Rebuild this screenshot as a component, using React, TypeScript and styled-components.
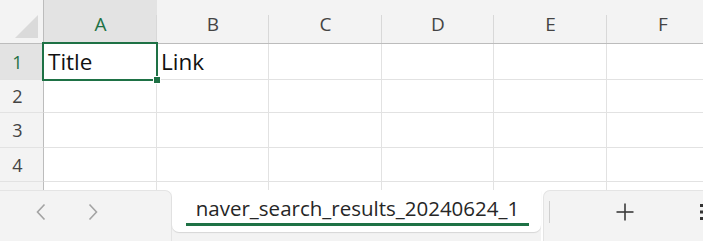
import React from "react";
import styled, { createGlobalStyle } from "styled-components";

const GlobalStyle = createGlobalStyle`
  html, body { margin: 0; padding: 0; background: #ffffff; }
  body { font-family: "Open Sans", "Noto Sans", sans-serif; overflow: hidden; }
  #root { width: 703px; height: 241px; }
`;

const GREEN = "#1e7145";
const GRID = "#e2e2e2";
const HEADER_BG = "#f3f3f3";
const HEADER_SEL = "#e3e3e3";
const BAR_BG = "#f3f3f3";

const Window = styled.div`
  width: 703px;
  height: 241px;
  display: flex;
  flex-direction: column;
  background: #ffffff;
`;

const Sheet = styled.div`
  height: 190px;
  overflow: hidden;
  display: grid;
  grid-template-columns: 44px 113px 112px 113px 112px 113px 112px;
  grid-template-rows: 44px 36px 33px 35px 34px 40px;
`;

const Corner = styled.div`
  background: ${HEADER_BG};
  border-right: 1px solid #bcbcbc;
  border-bottom: 1px solid #bcbcbc;
  display: flex;
  align-items: flex-end;
  justify-content: flex-end;
  padding: 0 5px 5px 0;
`;

const ColHeader = styled.div<{ $selected?: boolean }>`
  position: relative;
  background: ${(p) => (p.$selected ? HEADER_SEL : HEADER_BG)};
  border-bottom: 1px solid #bcbcbc;
  color: ${(p) => (p.$selected ? GREEN : "#444444")};
  font-size: 19px;
  display: flex;
  align-items: center;
  justify-content: center;
  padding-top: 5px;
  box-sizing: border-box;
  &::after {
    content: "";
    position: absolute;
    right: 0;
    top: 15px;
    bottom: 0;
    width: 1px;
    background: #d8d8d8;
  }
`;

const RowHeader = styled.div<{ $selected?: boolean }>`
  background: ${(p) => (p.$selected ? HEADER_SEL : HEADER_BG)};
  border-right: 1px solid #bcbcbc;
  border-bottom: 1px solid ${GRID};
  color: ${(p) => (p.$selected ? GREEN : "#444444")};
  font-size: 18px;
  display: flex;
  align-items: center;
  justify-content: center;
  padding-right: 8px;
  box-sizing: border-box;
`;

const Cell = styled.div<{ $active?: boolean }>`
  position: relative;
  border-right: 1px solid ${GRID};
  border-bottom: 1px solid ${GRID};
  font-size: 22.5px;
  color: #111111;
  display: flex;
  align-items: center;
  padding-left: 4px;
  box-sizing: border-box;
  white-space: nowrap;
  ${(p) =>
    p.$active &&
    `
    &::after {
      content: "";
      position: absolute;
      left: -2px;
      top: -2px;
      right: -2px;
      bottom: -2px;
      border: 2px solid ${GREEN};
      pointer-events: none;
      z-index: 1;
    }
  `}
`;

const FillHandle = styled.span`
  position: absolute;
  right: -5px;
  bottom: -5px;
  width: 6px;
  height: 6px;
  background: ${GREEN};
  border: 1px solid #ffffff;
  z-index: 2;
`;

const Bar = styled.div`
  flex: 1;
  display: flex;
  background: #ffffff;
`;

const LeftPanel = styled.div`
  width: 172px;
  background: ${BAR_BG};
  border-top-right-radius: 7px;
  border-top: 1px solid #e4e4e4;
  border-right: 1px solid #e4e4e4;
  box-sizing: border-box;
  display: flex;
  align-items: center;
  padding: 0 0 8px 33px;
  gap: 36px;
`;

const NavButton = styled.span`
  width: 16px;
  height: 20px;
  display: flex;
  align-items: center;
  justify-content: center;
`;

const TabColumn = styled.div`
  width: 369px;
  background: ${BAR_BG};
  display: flex;
  flex-direction: column;
`;

const Tab = styled.div`
  height: 42px;
  background: #ffffff;
  border-radius: 0 0 7px 7px;
  box-shadow: 0 1px 1px rgba(0, 0, 0, 0.12);
  padding: 0 12px 0 14px;
  display: flex;
  flex-direction: column;
  align-items: stretch;
`;

const TabLabel = styled.div`
  height: 36px;
  display: flex;
  align-items: flex-end;
  justify-content: center;
  font-size: 20.5px;
  color: #262626;
  border-bottom: 3px solid ${GREEN};
  line-height: 1;
  padding-bottom: 5px;
  box-sizing: border-box;
`;

const RightPanel = styled.div`
  flex: 1;
  margin-left: 2px;
  background: ${BAR_BG};
  border-top-left-radius: 7px;
  border-top: 1px solid #e4e4e4;
  border-left: 1px solid #e4e4e4;
  box-sizing: border-box;
  display: flex;
  align-items: center;
  padding-bottom: 8px;
`;

const Separator = styled.span`
  width: 1px;
  height: 22px;
  background: #cfcfcf;
  margin-left: 5px;
`;

const AddButton = styled.span`
  margin-left: 66px;
  width: 18px;
  height: 18px;
  display: flex;
`;

const MoreButton = styled.span`
  margin-left: auto;
  margin-right: -3px;
  width: 6px;
  display: flex;
`;

const cols = ["A", "B", "C", "D", "E", "F"];
const rows = [1, 2, 3, 4, 5];
const visibleRowLabels = 4;

const data: Record<string, string> = { A1: "Title", B1: "Link" };

export default function App() {
  return (
    <>
      <GlobalStyle />
      <Window>
        <Sheet>
          <Corner>
            <svg width="23" height="23" viewBox="0 0 23 23">
              <polygon points="23,0 23,23 0,23" fill="#dadada" />
            </svg>
          </Corner>
          {cols.map((c) => (
            <ColHeader key={c} $selected={c === "A"}>
              {c}
            </ColHeader>
          ))}
          {rows.map((r) => (
            <React.Fragment key={r}>
              <RowHeader $selected={r === 1}>{r <= visibleRowLabels ? r : ""}</RowHeader>
              {cols.map((c) => {
                const id = `${c}${r}`;
                const active = id === "A1";
                return (
                  <Cell key={id} $active={active}>
                    {data[id] ?? ""}
                    {active && <FillHandle />}
                  </Cell>
                );
              })}
            </React.Fragment>
          ))}
        </Sheet>
        <Bar>
          <LeftPanel>
            <NavButton>
              <svg width="10" height="18" viewBox="0 0 10 18">
                <polyline points="8.5,1.5 1.5,9 8.5,16.5" fill="none" stroke="#a3a3a3" strokeWidth="1.6" />
              </svg>
            </NavButton>
            <NavButton>
              <svg width="10" height="18" viewBox="0 0 10 18">
                <polyline points="1.5,1.5 8.5,9 1.5,16.5" fill="none" stroke="#a3a3a3" strokeWidth="1.6" />
              </svg>
            </NavButton>
          </LeftPanel>
          <TabColumn>
            <Tab>
              <TabLabel>naver_search_results_20240624_1</TabLabel>
            </Tab>
          </TabColumn>
          <RightPanel>
            <Separator />
            <AddButton>
              <svg width="18" height="18" viewBox="0 0 18 18">
                <line x1="9" y1="0.5" x2="9" y2="17.5" stroke="#3a3a3a" strokeWidth="1.6" />
                <line x1="0.5" y1="9" x2="17.5" y2="9" stroke="#3a3a3a" strokeWidth="1.6" />
              </svg>
            </AddButton>
            <MoreButton>
              <svg width="6" height="20" viewBox="0 0 6 20">
                <rect x="0" y="2" width="3" height="3" fill="#333" />
                <rect x="0" y="8.5" width="3" height="3" fill="#333" />
                <rect x="0" y="15" width="3" height="3" fill="#333" />
              </svg>
            </MoreButton>
          </RightPanel>
        </Bar>
      </Window>
    </>
  );
}
